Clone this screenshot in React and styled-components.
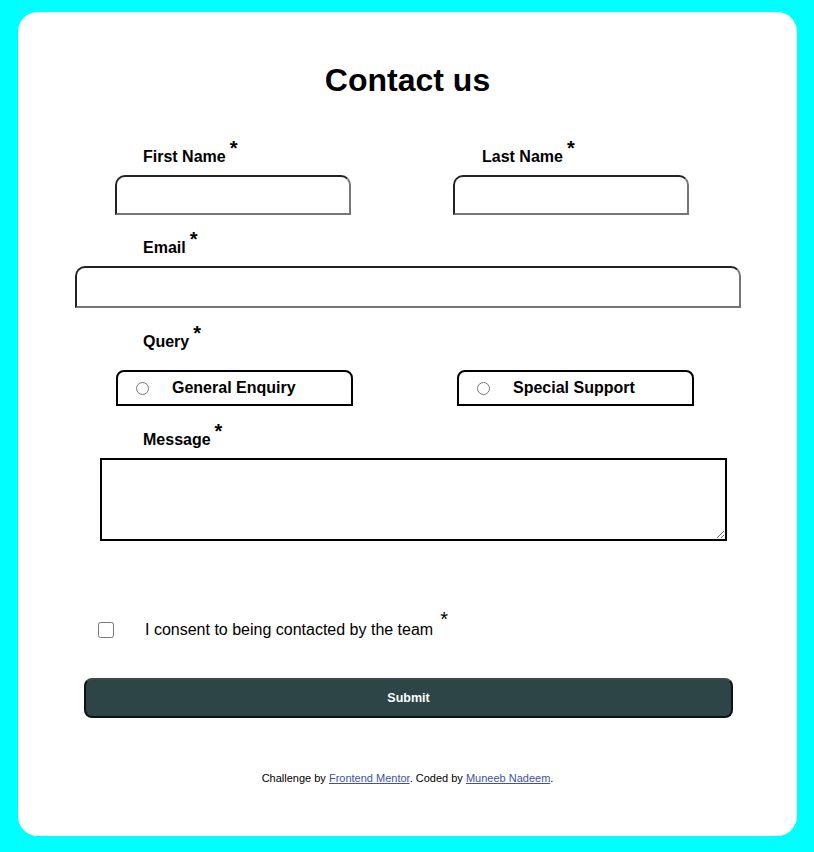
import React from 'react';
import styled, { createGlobalStyle } from 'styled-components';

const GlobalStyle = createGlobalStyle`
  html, body {
    margin: 0;
    padding: 0;
    background: #00ffff;
    font-family: "Liberation Sans", Arial, sans-serif;
  }
`;

const Page = styled.div`
  padding: 12px 17px 16px 18px;
`;

const Card = styled.form`
  background: #fff;
  border-radius: 20px;
  width: 779px;
  height: 824px;
  box-sizing: border-box;
  padding-top: 50px;
  display: flex;
  flex-direction: column;
`;

const Title = styled.h1`
  margin: 0;
  font-size: 32px;
  line-height: 37px;
  text-align: center;
  color: #000;
`;

const Row = styled.div`
  display: flex;
  gap: ${(p) => p.gap || 0}px;
  padding-left: ${(p) => p.left || 0}px;
  margin-top: ${(p) => p.top || 0}px;
`;

const Field = styled.div`
  display: flex;
  flex-direction: column;
  margin-top: ${(p) => p.top || 0}px;
  padding-left: ${(p) => p.left || 0}px;
`;

const Label = styled.label`
  display: block;
  font-size: 16px;
  font-weight: bold;
  line-height: 18px;
  color: #000;
  padding-left: ${(p) => p.indent || 0}px;
  margin-bottom: ${(p) => p.gap || 10}px;
`;

const Star = styled.sup`
  position: relative;
  top: -${(p) => p.lift || 7}px;
  font-size: 20px;
  line-height: 0;
  margin-left: ${(p) => p.space || 4}px;
  vertical-align: baseline;
  font-weight: ${(p) => (p.light ? 'normal' : 'bold')};
`;

const TextInput = styled.input`
  box-sizing: border-box;
  width: ${(p) => p.w}px;
  height: ${(p) => p.h || 40}px;
  margin: 0;
  border-style: solid;
  border-width: 2px;
  border-color: #222 #767676 #767676 #222;
  border-radius: 10px 10px 0 0;
  background: #fff;
  font: 16px "Liberation Sans", Arial, sans-serif;
  padding: 0 10px;
  outline: none;
`;

const RadioBox = styled.label`
  box-sizing: border-box;
  width: 237px;
  height: 36px;
  border: 2px solid #000;
  border-radius: 8px 8px 0 0;
  display: flex;
  align-items: center;
  padding-left: 18px;
  font-size: 16px;
  font-weight: bold;
  color: #000;
`;

const Radio = styled.input`
  width: 13px;
  height: 13px;
  margin: 0 23px 0 0;
`;

const MessageArea = styled.textarea`
  box-sizing: border-box;
  width: 627px;
  height: 83px;
  margin: 0;
  border: 2px solid #000;
  border-radius: 0;
  font: 16px "Liberation Sans", Arial, sans-serif;
  outline: none;
`;

const Consent = styled.label`
  display: flex;
  align-items: center;
  margin-top: ${(p) => p.top}px;
  padding-left: 80px;
  font-size: 16px;
  line-height: 18px;
  color: #000;
`;

const ConsentText = styled.span`
  display: block;
  height: 18px;
  white-space: nowrap;
`;

const Check = styled.input`
  width: 16px;
  height: 16px;
  margin: 0 31px 0 0;
`;

const SubmitButton = styled.button`
  margin: 39px 0 0 66px;
  width: 649px;
  height: 40px;
  box-sizing: border-box;
  background: #2e4548;
  color: #fff;
  border: 2px solid #111;
  border-top-color: #3a4a4c;
  border-radius: 8px;
  font: bold 12.5px "Liberation Sans", Arial, sans-serif;
`;

const Footer = styled.p`
  margin: 54px 0 0;
  text-align: center;
  font-size: 11px;
  line-height: 13px;
  color: #000;
  a {
    color: #3e52a3;
  }
`;

export default function App() {
  return (
    <Page>
      <GlobalStyle />
      <Card onSubmit={(e) => e.preventDefault()}>
        <Title>Contact us</Title>
        <Row top={49} left={97} gap={102}>
          <Field>
            <Label indent={28} gap={9}>
              First Name<Star>*</Star>
            </Label>
            <TextInput w={236} />
          </Field>
          <Field>
            <Label indent={29} gap={9}>
              Last Name<Star>*</Star>
            </Label>
            <TextInput w={236} />
          </Field>
        </Row>
        <Field top={24} left={57}>
          <Label indent={68} gap={9}>
            Email<Star>*</Star>
          </Label>
          <TextInput w={666} h={42} />
        </Field>
        <Field top={25} left={125}>
          <Label gap={0}>
            Query<Star>*</Star>
          </Label>
        </Field>
        <Row top={9} left={98} gap={104}>
          <RadioBox>
            <Radio type="radio" name="query" />
            General Enquiry
          </RadioBox>
          <RadioBox>
            <Radio type="radio" name="query" />
            Special Support
          </RadioBox>
        </Row>
        <Field top={25} left={82}>
          <Label indent={43} gap={9}>
            Message<Star>*</Star>
          </Label>
          <MessageArea />
        </Field>
        <Consent top={80}>
          <Check type="checkbox" />
          <ConsentText>
            I consent to being contacted by the team
            <Star light space={7} lift={9}>*</Star>
          </ConsentText>
        </Consent>
        <SubmitButton type="submit">Submit</SubmitButton>
        <Footer>
          Challenge by <a href="#">Frontend Mentor</a>. Coded by{' '}
          <a href="#">Muneeb Nadeem</a>.
        </Footer>
      </Card>
    </Page>
  );
}
